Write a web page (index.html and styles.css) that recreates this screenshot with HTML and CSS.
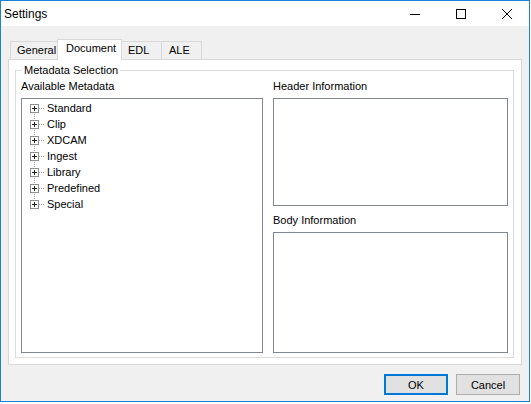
FILE: index.html
```html
<!DOCTYPE html>
<html>
<head>
<meta charset="utf-8">
<title>Settings</title>
<link rel="stylesheet" href="styles.css">
</head>
<body>
<div class="window">
  <div class="titlebar">
    <span class="title">Settings</span>
    <div class="caption">
      <span class="cbtn"><svg width="10" height="10" viewBox="0 0 10 10"><path d="M0 5.5H10" stroke="#000" stroke-width="1"/></svg></span>
      <span class="cbtn"><svg width="10" height="10" viewBox="0 0 10 10"><rect x="0.5" y="0.5" width="9" height="9" fill="none" stroke="#000" stroke-width="1"/></svg></span>
      <span class="cbtn"><svg width="10" height="10" viewBox="0 0 10 10"><path d="M0 0L10 10M10 0L0 10" stroke="#000" stroke-width="1"/></svg></span>
    </div>
  </div>
  <div class="main">
    <div class="tabstrip">
      <div class="tab t-general">General</div>
      <div class="tab t-document active">Document</div>
      <div class="tab t-edl">EDL</div>
      <div class="tab t-ale">ALE</div>
    </div>
    <div class="tabpage">
      <fieldset class="group">
        <legend>Metadata Selection</legend>
        <div class="cols">
          <div class="col">
            <div class="label">Available Metadata</div>
            <div class="listbox tree">
              <ul>
                <li><span class="rail"><svg width="9" height="9" viewBox="0 0 9 9"><rect x="0.5" y="0.5" width="8" height="8" fill="#fff" stroke="#919191"/><path d="M2 4.5H7M4.5 2V7" stroke="#1c1c1c"/></svg></span><span class="conn"></span><span>Standard</span></li>
                <li><span class="rail"><svg width="9" height="9" viewBox="0 0 9 9"><rect x="0.5" y="0.5" width="8" height="8" fill="#fff" stroke="#919191"/><path d="M2 4.5H7M4.5 2V7" stroke="#1c1c1c"/></svg></span><span class="conn"></span><span>Clip</span></li>
                <li><span class="rail"><svg width="9" height="9" viewBox="0 0 9 9"><rect x="0.5" y="0.5" width="8" height="8" fill="#fff" stroke="#919191"/><path d="M2 4.5H7M4.5 2V7" stroke="#1c1c1c"/></svg></span><span class="conn"></span><span>XDCAM</span></li>
                <li><span class="rail"><svg width="9" height="9" viewBox="0 0 9 9"><rect x="0.5" y="0.5" width="8" height="8" fill="#fff" stroke="#919191"/><path d="M2 4.5H7M4.5 2V7" stroke="#1c1c1c"/></svg></span><span class="conn"></span><span>Ingest</span></li>
                <li><span class="rail"><svg width="9" height="9" viewBox="0 0 9 9"><rect x="0.5" y="0.5" width="8" height="8" fill="#fff" stroke="#919191"/><path d="M2 4.5H7M4.5 2V7" stroke="#1c1c1c"/></svg></span><span class="conn"></span><span>Library</span></li>
                <li><span class="rail"><svg width="9" height="9" viewBox="0 0 9 9"><rect x="0.5" y="0.5" width="8" height="8" fill="#fff" stroke="#919191"/><path d="M2 4.5H7M4.5 2V7" stroke="#1c1c1c"/></svg></span><span class="conn"></span><span>Predefined</span></li>
                <li><span class="rail"><svg width="9" height="9" viewBox="0 0 9 9"><rect x="0.5" y="0.5" width="8" height="8" fill="#fff" stroke="#919191"/><path d="M2 4.5H7M4.5 2V7" stroke="#1c1c1c"/></svg></span><span class="conn"></span><span>Special</span></li>
              </ul>
            </div>
          </div>
          <div class="col">
            <div class="label">Header Information</div>
            <div class="listbox header-box"></div>
            <div class="label body-label">Body Information</div>
            <div class="listbox fill"></div>
          </div>
        </div>
      </fieldset>
    </div>
    <div class="buttons">
      <button class="btn default">OK</button>
      <button class="btn">Cancel</button>
    </div>
  </div>
</div>
</body>
</html>
```
FILE: styles.css
```css
* { box-sizing: border-box; }
html, body { margin: 0; background: #fff; }
body {
  font-family: "Liberation Sans", Arial, sans-serif;
  font-size: 11px;
  color: #000;
}
.window {
  width: 530px;
  height: 402px;
  border: 1px solid #1883d7;
  background: #f0f0f0;
  display: flex;
  flex-direction: column;
}
.titlebar {
  height: 25px;
  flex: none;
  background: #fff;
  display: flex;
  align-items: center;
}
.title {
  flex: 1;
  padding-left: 3px;
  font-size: 12px;
}
.caption {
  display: flex;
  align-self: stretch;
}
.cbtn {
  width: 46px;
  padding-left: 2px;
  display: flex;
  align-items: center;
  justify-content: center;
}
.cbtn svg { display: block; }

.main {
  flex: 1;
  display: flex;
  flex-direction: column;
  padding-left: 7px;
}
.tabstrip {
  display: flex;
  align-items: flex-end;
  height: 20px;
  margin-top: 13px;
  padding-left: 2px;
}
.tab {
  height: 18px;
  border: 1px solid #d9d9d9;
  border-bottom: none;
  line-height: 17px;
  padding-left: 6px;
  margin-left: -1px;
  background: #f0f0f0;
  white-space: nowrap;
}
.tab:first-child { margin-left: 0; }
.tab.active {
  height: 21px;
  margin-bottom: -1px;
  background: #fff;
  padding-top: 2px;
  line-height: 13px;
  padding-left: 8px;
  position: relative;
  z-index: 1;
}
.t-general { width: 48px; }
.t-document { width: 65px; }
.t-edl { width: 41px; }
.t-ale { width: 41px; padding-left: 7px; }

.tabpage {
  width: 514px;
  height: 306px;
  border: 1px solid #d9d9d9;
  background: #fff;
  padding: 4px 7px 6px 6px;
}
.group {
  margin: 0;
  border: 1px solid #dcdcdc;
  padding: 0 5px 4px 5px;
  min-width: 0;
}
.group legend {
  padding: 0 2px;
  margin-left: 1px;
  line-height: 13px;
}
.cols {
  display: grid;
  grid-template-columns: 242px 235px;
  column-gap: 10px;
  margin-top: 3px;
  height: 273px;
}
.col {
  display: flex;
  flex-direction: column;
}
.label {
  height: 13px;
  line-height: 13px;
  margin-bottom: 5px;
  white-space: nowrap;
}
.listbox {
  border: 1px solid #828790;
  background: #fff;
}
.tree { flex: 1; }
.header-box { height: 108px; }
.body-label { margin-top: 8px; }
.fill { flex: 1; }

.tree ul {
  list-style: none;
  margin: 0;
  padding: 1px 0 0 8px;
}
.tree li {
  display: flex;
  align-items: center;
  height: 16px;
  white-space: nowrap;
}
.rail {
  width: 9px;
  height: 16px;
  display: flex;
  align-items: center;
  background: repeating-linear-gradient(to bottom, #a0a0a0 0 1px, transparent 1px 2px) center / 1px 100% no-repeat;
}
.tree li:first-child .rail {
  background-size: 1px 50%;
  background-position: center bottom;
}
.tree li:last-child .rail {
  background-size: 1px 50%;
  background-position: center top;
}
.rail svg { display: block; }
.conn {
  width: 6px;
  height: 1px;
  margin-right: 2px;
  background: repeating-linear-gradient(to right, #a0a0a0 0 1px, transparent 1px 2px);
}

.buttons {
  display: flex;
  justify-content: flex-end;
  gap: 8px;
  margin-top: 9px;
  padding-right: 9px;
}
.btn {
  width: 64px;
  height: 21px;
  font: inherit;
  color: #000;
  background: #e1e1e1;
  border: 1px solid #adadad;
  padding: 0;
}
.btn.default { border: 2px solid #0078d7; }
```
